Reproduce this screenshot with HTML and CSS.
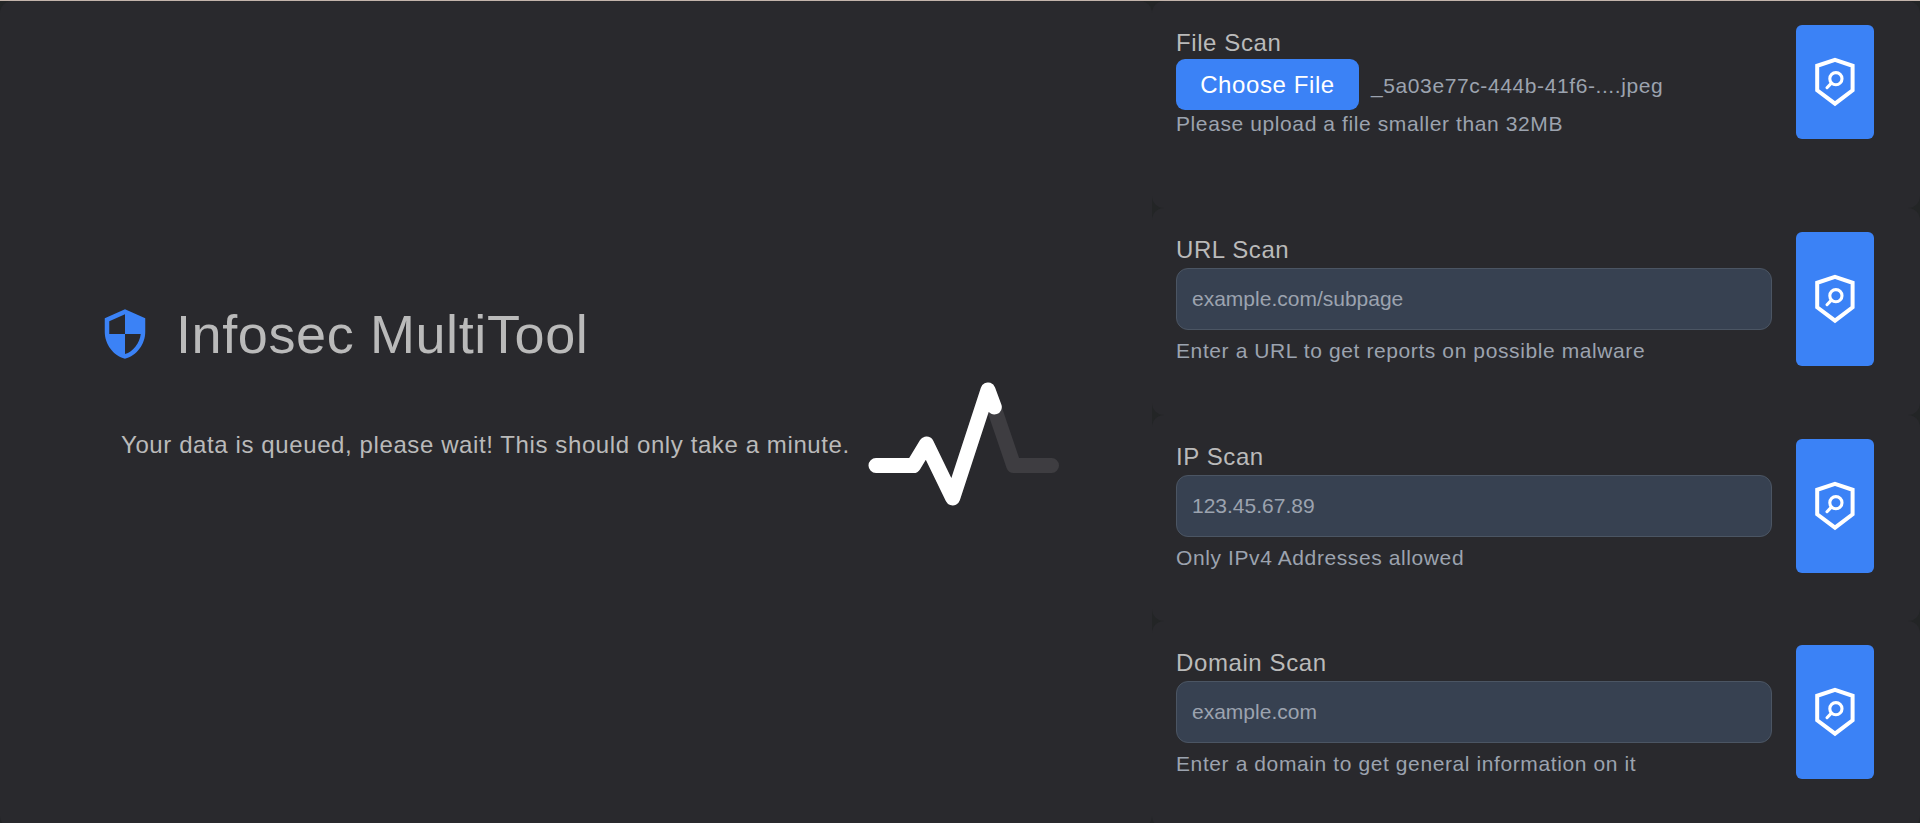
FILE: index.html
```html
<!DOCTYPE html>
<html lang="en">
<head>
<meta charset="utf-8">
<title>Infosec MultiTool</title>
<link rel="stylesheet" href="styles.css">
</head>
<body>
<svg class="defs" width="0" height="0" aria-hidden="true">
  <symbol id="scan" viewBox="0 0 54 54">
    <path d="M27 4.800 44.600 10.800V35.300L27 48.700 9.200 35.300V10.800Z" fill="none" stroke="#fff" stroke-width="4"/>
    <circle cx="27.900" cy="23.700" r="6.100" fill="none" stroke="#fff" stroke-width="3.100"/>
    <path d="M23.400 28.100 19 32.700" stroke="#fff" stroke-width="3.100" stroke-linecap="round"/>
  </symbol>
</svg>
<div class="page">
  <main class="hero">
    <header class="brand">
      <svg class="logo" viewBox="0 0 24 24"><path fill="#3b82f6" d="M12 1 3 5v6c0 5.550 3.840 10.740 9 12 5.160-1.260 9-6.450 9-12V5l-9-4zm0 10.990h7c-.53 4.120-3.280 7.790-7 8.940V12H5V6.300l7-3.110v8.800z"/></svg>
      <h1 class="title">Infosec MultiTool</h1>
    </header>
    <div class="status">
      <p class="message">Your data is queued, please wait! This should only take a minute.</p>
      <svg class="pulse" viewBox="0 0 192 124" fill="none" stroke-width="15" stroke-linecap="round" stroke-linejoin="round">
        <path stroke="#3e3d41" d="M8 83.500H45.500L58.500 62 84.700 116 120 8 145.700 83.500H183.500"/>
        <path stroke="#fff" d="M8 83.500H45.500L58.500 62 84.700 116 120 8 126.300 25"/>
      </svg>
    </div>
  </main>
  <aside class="scans">
    <form class="card">
      <div class="field">
        <label class="label">File Scan</label>
        <div class="file"><button type="button" class="choose">Choose File</button><span class="filename">_5a03e77c-444b-41f6-....jpeg</span></div>
        <p class="help help-file">Please upload a file smaller than 32MB</p>
      </div>
      <button type="button" class="go"><svg class="icon"><use href="#scan"/></svg></button>
    </form>
    <form class="card">
      <div class="field">
        <label class="label">URL Scan</label>
        <input class="input" placeholder="example.com/subpage">
        <p class="help">Enter a URL to get reports on possible malware</p>
      </div>
      <button type="button" class="go"><svg class="icon"><use href="#scan"/></svg></button>
    </form>
    <form class="card">
      <div class="field">
        <label class="label">IP Scan</label>
        <input class="input" placeholder="123.45.67.89">
        <p class="help">Only IPv4 Addresses allowed</p>
      </div>
      <button type="button" class="go"><svg class="icon"><use href="#scan"/></svg></button>
    </form>
    <form class="card">
      <div class="field">
        <label class="label">Domain Scan</label>
        <input class="input" placeholder="example.com">
        <p class="help">Enter a domain to get general information on it</p>
      </div>
      <button type="button" class="go"><svg class="icon"><use href="#scan"/></svg></button>
    </form>
  </aside>
</div>
</body>
</html>
```
FILE: styles.css
```css
* { box-sizing: border-box; margin: 0; }
html { font-size: 24px; }
body {
  height: 823px;
  overflow: hidden;
  background: #232526;
  color: #bababa;
  font: 1rem/1.5 "Liberation Sans", Arial, sans-serif;
  letter-spacing: 0.025em;
}
.defs { display: block; height: 0; }
.page {
  display: grid;
  grid-template-columns: 3fr 2fr;
  height: 828px;
  border-top: 1px solid #c3b4ab;
}
.hero {
  padding: 303px 0 0 98px;
  border-radius: 12px;
  background: #29292d;
}
.brand { display: flex; align-items: center; gap: 24px; height: 60px; }
.logo { width: 54px; height: 54px; flex: none; }
.title { font-size: 54px; line-height: 60px; font-weight: 400; }
.status { display: flex; margin: 18px 0 0 23px; }
.message { width: 747px; padding-top: 45px; white-space: nowrap; }
.pulse { width: 192px; height: 124px; }
.scans { display: grid; grid-template-rows: repeat(4, 1fr); }
.card {
  display: flex;
  align-items: flex-start;
  gap: 24px;
  padding: 24px 46px 0 24px;
  border-radius: 12px;
  background: #29292d;
}
.field { flex: 1; }
.label { display: block; height: 36px; }
.input {
  display: block;
  width: 100%;
  height: 62px;
  padding: 0 15px;
  border: 1px solid #4b5563;
  border-radius: 12px;
  background: #374151;
  color: #9ca3af;
  font: 21px "Liberation Sans", Arial, sans-serif;
}
.input::placeholder { color: #9ca3af; opacity: 1; }
.help { margin-top: 6px; font-size: 21px; line-height: 30px; color: #9ca3af; }
.help-file { margin-top: 0; }
.file {
  display: flex;
  align-items: center;
  gap: 12px;
  height: 51px;
  margin: -2px 0 -1px;
  color: #9ca3af;
  font-size: 21px;
}
.filename { padding-top: 2px; }
.choose {
  width: 183px;
  height: 51px;
  padding: 0;
  border: 0;
  border-radius: 9px;
  background: #3b82f6;
  color: #fff;
  font: 24px "Liberation Sans", Arial, sans-serif;
  letter-spacing: 0.025em;
}
.go {
  display: flex;
  align-items: center;
  justify-content: center;
  width: 78px;
  height: 134px;
  padding: 0;
  border: 0;
  border-radius: 6px;
  background: #3b82f6;
}
.card:first-child .go { height: 114px; }
.icon { width: 54px; height: 54px; }
```
